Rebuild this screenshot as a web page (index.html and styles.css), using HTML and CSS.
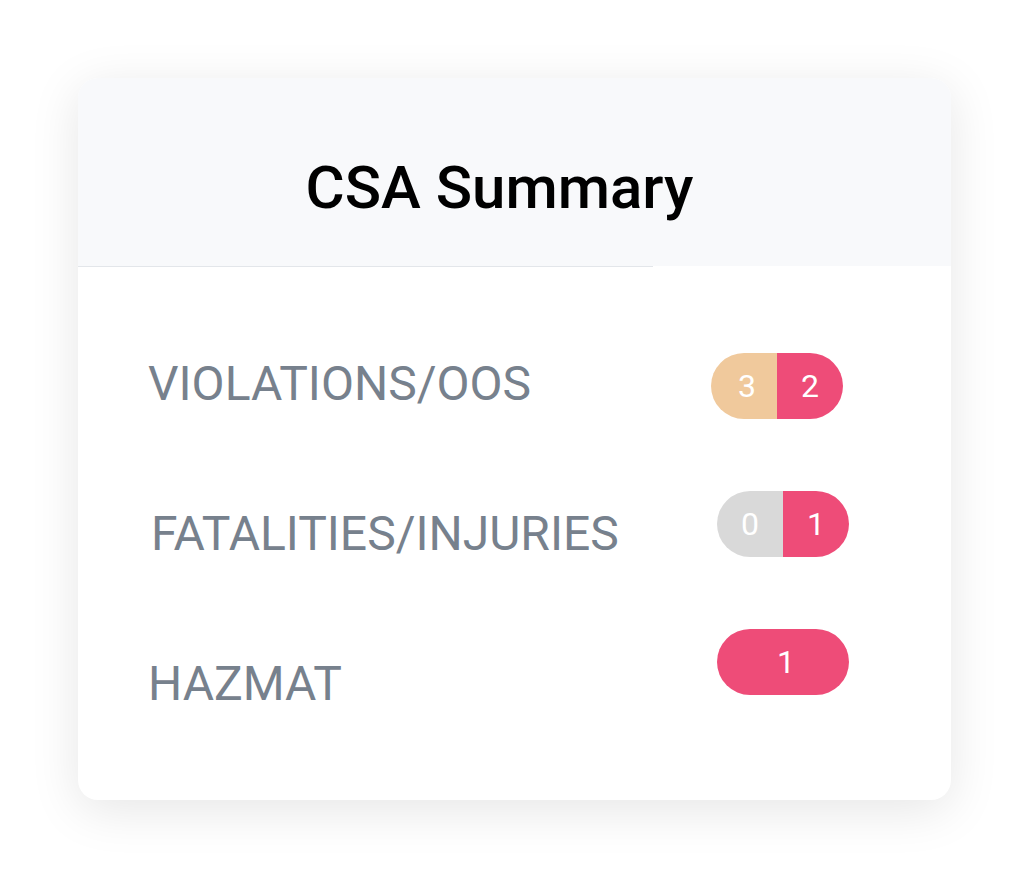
FILE: index.html
```html
<!DOCTYPE html>
<html lang="en">
<head>
    <meta charset="UTF-8">
    <meta name="viewport" content="width=device-width, initial-scale=1.0">
    <title>CSA Summary</title>
    <link rel="stylesheet" href="styles.css">
</head>
<body>
    <div class="card">
        <header class="card-header">
            <h1>CSA Summary</h1>
        </header>
        <div class="divider"></div>

        <div class="card-body">
            <div class="labels">
                <div class="label">VIOLATIONS/OOS</div>
                <div class="label label-shift">FATALITIES/INJURIES</div>
                <div class="label">HAZMAT</div>
            </div>
            <div class="pills">
                <div class="pill pill-first">
                    <span class="seg seg-peach">3</span>
                    <span class="seg seg-pink">2</span>
                </div>
                <div class="pill">
                    <span class="seg seg-gray">0</span>
                    <span class="seg seg-pink">1</span>
                </div>
                <div class="pill">
                    <span class="seg seg-pink seg-full">1</span>
                </div>
            </div>
        </div>
    </div>
</body>
</html>
```

FILE: styles.css
```css
body {
    margin: 0;
    padding: 78px 78px 79px 78px;
    min-height: 100vh;
    box-sizing: border-box;
    background-color: #ffffff;
    font-family: Roboto, "Liberation Sans", sans-serif;
}
.card {
    width: 873px;
    height: 722px;
    background-color: #ffffff;
    border-radius: 20px;
    box-shadow: 0 10px 50px rgba(0, 0, 0, 0.1);
    overflow: hidden;
}
.card-header {
    background-color: #f8f9fb;
    height: 188px;
    display: flex;
    justify-content: center;
    padding-right: 30px;
}
h1 {
    margin: 0;
    padding-top: 75px;
    font-size: 60px;
    font-weight: 500;
    line-height: 70px;
    color: #000000;
}
.divider {
    width: 575px;
    height: 1px;
    background-color: #e3e6ea;
}
.card-body {
    display: flex;
    justify-content: space-between;
    padding: 86px 102px 0 70px;
}
.labels {
    display: flex;
    flex-direction: column;
    gap: 96px;
    padding-top: 4px;
}
.label {
    font-size: 48px;
    line-height: 54px;
    color: #77818d;
}
.label-shift {
    margin-left: 3px;
}
.pills {
    display: flex;
    flex-direction: column;
    align-items: flex-end;
    gap: 72px;
}
.pill {
    display: flex;
    width: 132px;
    height: 66px;
    border-radius: 33px;
    overflow: hidden;
}
.pill-first {
    margin-right: 6px;
}
.seg {
    flex: 0 0 50%;
    box-sizing: border-box;
    display: flex;
    align-items: center;
    justify-content: center;
    font-size: 32px;
    color: #ffffff;
}
.seg-peach {
    background-color: #f0c99c;
    padding-left: 6px;
}
.seg-pink {
    background-color: #ee4c78;
}
.seg-gray {
    background-color: #d9d9d9;
}
.seg-full {
    flex-basis: 100%;
    padding-left: 6px;
}
```
